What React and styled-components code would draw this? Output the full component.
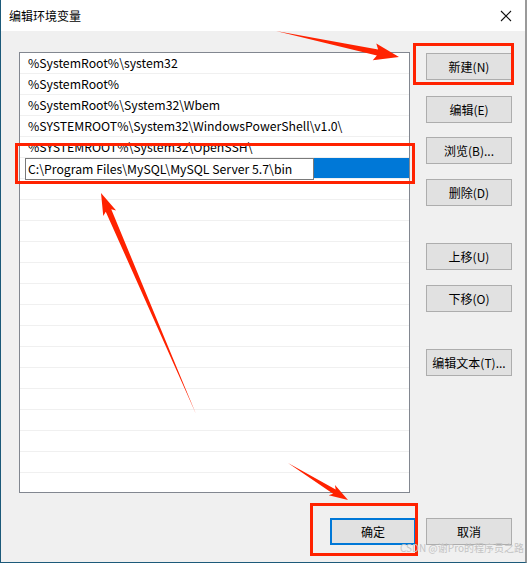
import React from "react";
import styled, { createGlobalStyle } from "styled-components";

const GlobalStyle = createGlobalStyle`
  html, body {
    margin: 0;
    padding: 0;
    background: #ffffff;
  }
  * {
    box-sizing: border-box;
  }
`;

const paths = [
  "%SystemRoot%\\system32",
  "%SystemRoot%",
  "%SystemRoot%\\System32\\Wbem",
  "%SYSTEMROOT%\\System32\\WindowsPowerShell\\v1.0\\",
  "%SYSTEMROOT%\\System32\\OpenSSH\\",
];

const sideButtons = [
  { label: "新建(N)", space: 0 },
  { label: "编辑(E)", space: 16 },
  { label: "浏览(B)...", space: 14 },
  { label: "删除(D)", space: 15 },
  { label: "上移(U)", space: 37 },
  { label: "下移(O)", space: 15 },
  { label: "编辑文本(T)...", space: 37 },
];

const EMPTY_ROWS = 15;

// tapered arrow: thin tail, wide head
const arrowPoints = (tx, ty, px, py, head, headW, shaft) => {
  const len = Math.hypot(px - tx, py - ty);
  const ux = (px - tx) / len;
  const uy = (py - ty) / len;
  const nx = -uy;
  const ny = ux;
  const bx = px - ux * head;
  const by = py - uy * head;
  const pts = [
    [tx, ty],
    [bx + (nx * shaft) / 2, by + (ny * shaft) / 2],
    [bx + (nx * headW) / 2 - ux * 3, by + (ny * headW) / 2 - uy * 3],
    [px, py],
    [bx - (nx * headW) / 2 - ux * 3, by - (ny * headW) / 2 - uy * 3],
    [bx - (nx * shaft) / 2, by - (ny * shaft) / 2],
  ];
  return pts.map((p) => p.join(",")).join(" ");
};

const App = () => {
  return (
    <>
      <GlobalStyle />
      <Window>
        <TitleBar>
          <Title>编辑环境变量</Title>
          <CloseIcon width="12" height="12" viewBox="0 0 12 12">
            <path d="M1 1 L11 11 M11 1 L1 11" stroke="#111" strokeWidth="1.1" fill="none" />
          </CloseIcon>
        </TitleBar>
        <Body>
          <Main>
            <ListBox>
              {paths.map((p) => (
                <Row key={p}>{p}</Row>
              ))}
              <Row $editing>
                <EditInput>C:\Program Files\MySQL\MySQL Server 5.7\bin</EditInput>
                <Selection />
              </Row>
              {Array.from({ length: EMPTY_ROWS }).map((_, i) => (
                <Row key={i} />
              ))}
            </ListBox>
            <ButtonColumn>
              {sideButtons.map((b) => (
                <Button key={b.label} $space={b.space}>
                  {b.label}
                </Button>
              ))}
            </ButtonColumn>
          </Main>
          <Footer>
            <Button $primary>确定</Button>
            <Button>取消</Button>
          </Footer>
        </Body>

        <Annotations width="527" height="563" viewBox="0 0 527 563">
          <rect x="414.5" y="44.5" width="98" height="39" fill="none" stroke="#ff2200" strokeWidth="3" />
          <rect x="16.5" y="144.5" width="397" height="38" fill="none" stroke="#ff2200" strokeWidth="3" />
          <rect x="311.5" y="504.5" width="105" height="50" fill="none" stroke="#ff2200" strokeWidth="3" />
          <polygon points={arrowPoints(276, 31, 399, 57, 22, 17, 6)} fill="#ff2200" />
          <polygon points={arrowPoints(196, 414, 101, 193, 19, 14, 6)} fill="#ff2200" />
          <polygon points={arrowPoints(288, 463, 348, 500, 16, 12, 5)} fill="#ff2200" />
        </Annotations>
        <Watermark>CSDN @谢Pro的程序员之路</Watermark>
      </Window>
    </>
  );
};

const Window = styled.div`
  position: relative;
  width: 527px;
  height: 563px;
  display: flex;
  flex-direction: column;
  border-left: 1px solid #1c5a7a;
  border-bottom: 1px solid #1c5a7a;
  border-right: 2px solid #9a9a9a;
  font-family: "Noto Sans CJK SC", "Noto Sans", sans-serif;
  font-size: 12px;
  color: #000;
  overflow: hidden;
`;

const TitleBar = styled.div`
  height: 31px;
  flex: none;
  background: #ffffff;
  display: flex;
  align-items: center;
  justify-content: space-between;
  padding: 0 13px 0 8px;
`;

const Title = styled.span`
  font-size: 12px;
  line-height: 1;
`;

const CloseIcon = styled.svg`
  display: block;
`;

const Body = styled.div`
  flex: 1;
  background: #f0f0f0;
  padding: 21px 13px 0 18px;
  display: flex;
  flex-direction: column;
`;

const Main = styled.div`
  display: flex;
  gap: 16px;
`;

const ListBox = styled.div`
  width: 391px;
  height: 441px;
  background: #ffffff;
  border: 1px solid #828790;
  overflow: hidden;
  display: flex;
  flex-direction: column;
  font-size: 12.25px;
`;

const Row = styled.div`
  position: relative;
  height: 21px;
  flex: none;
  border-bottom: 1px solid #f0f0f0;
  padding-left: ${(p) => (p.$editing ? "5px" : "8px")};
  display: flex;
  align-items: center;
  white-space: nowrap;
  line-height: 20px;
`;

const EditInput = styled.div`
  width: 289px;
  height: 22px;
  margin-top: 1px;
  background: #ffffff;
  border: 1px solid #7a7a7a;
  padding-left: 2px;
  display: flex;
  align-items: center;
  flex: none;
`;

const Selection = styled.div`
  flex: 1;
  height: 20px;
  background: #0078d7;
`;

const ButtonColumn = styled.div`
  display: flex;
  flex-direction: column;
  padding-top: 1px;
`;

const Button = styled.div`
  width: 86px;
  height: 27px;
  margin-top: ${(p) => (p.$space ? `${p.$space}px` : "0")};
  background: #e1e1e1;
  border: ${(p) => (p.$primary ? "2px solid #0078d7" : "1px solid #adadad")};
  display: flex;
  align-items: center;
  justify-content: center;
  font-size: 12px;
  white-space: nowrap;
`;

const Footer = styled.div`
  display: flex;
  justify-content: flex-end;
  gap: 10px;
  margin-top: 25px;
`;

const Annotations = styled.svg`
  position: absolute;
  left: -1px;
  top: 0;
  pointer-events: none;
`;

const Watermark = styled.div`
  position: absolute;
  right: 1px;
  bottom: 7px;
  font-size: 10px;
  color: #c4c4c4;
  white-space: nowrap;
`;

export default App;
